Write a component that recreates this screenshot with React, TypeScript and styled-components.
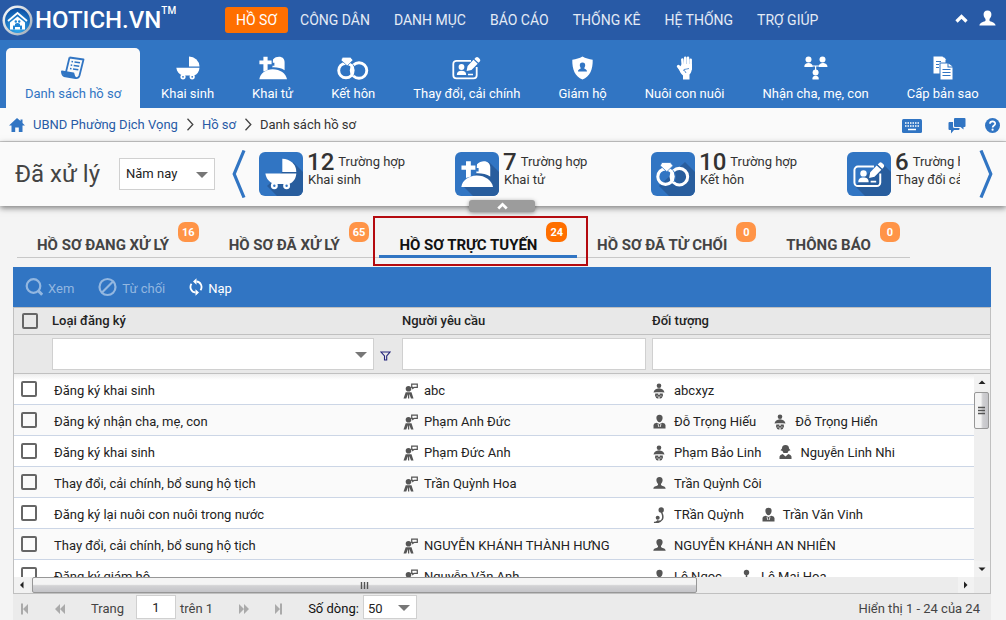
import React from "react";
import styled, { createGlobalStyle, css } from "styled-components";

const color = {
  navy: "#285aa6",
  blue: "#3175c3",
  shade: "#285d9d",
  orange: "#ff6f00",
  paper: "#fafafa",
  page: "#f4f4f4",
  header: "#e8e8e8",
  line: "#c0c0c0",
  text: "#333",
  icon: "#555",
};

const GlobalStyle = createGlobalStyle`
  *, *::before, *::after { box-sizing: border-box; }
  body {
    margin: 0;
    background: ${color.page};
    color: ${color.text};
    font: 13px/16px Roboto, "Noto Sans", sans-serif;
  }
  button, input, select { font: inherit; color: inherit; margin: 0; }
  button { border: 0; padding: 0; background: none; cursor: pointer; }
  a { color: inherit; text-decoration: none; }
  svg { display: block; flex: none; }
`;

const Page = styled.div`
  display: flex;
  flex-direction: column;
  min-height: 100vh;
`;

/* ---------- Top bar ---------- */

const TopBar = styled.header`
  display: flex;
  align-items: center;
  height: 40px;
  padding-right: 10px;
  background: ${color.navy};
  color: #fff;
`;

const Brand = styled.a`
  display: flex;
  align-items: center;
  width: 225px;
  padding-left: 2px;
  gap: 2px;
`;

const BrandName = styled.span`
  font-size: 24px;
  line-height: 30px;
  font-weight: 500;
`;

const Trademark = styled.sup`
  align-self: flex-start;
  margin-left: -2px;
  font-size: 10px;
  line-height: 12px;
  font-weight: 500;
`;

const MainNav = styled.nav`
  display: flex;
  flex: 1;
`;

const NavLink = styled.a<{ $active?: boolean }>`
  padding: 0 12px;
  border-radius: 3px;
  font-size: 14px;
  line-height: 26px;
  color: #e4ebf5;
  white-space: nowrap;
  ${(p) =>
    p.$active &&
    css`
      padding: 0 11px;
      background: ${color.orange};
      color: #fff;
    `}
`;

const UserTools = styled.div`
  display: flex;
  align-items: center;
  gap: 11px;
  padding-bottom: 4px;
`;

/* ---------- Ribbon ---------- */

const Ribbon = styled.nav`
  display: flex;
  height: 68px;
  padding: 8px 6px 0;
  background: ${color.blue};
  color: #fff;
`;

const RibbonTab = styled.a<{ $active?: boolean }>`
  display: flex;
  flex-direction: column;
  align-items: center;
  gap: 5px;
  padding: 8px 19px 0;
  border-radius: 5px 5px 0 0;
  line-height: 18px;
  white-space: nowrap;
  ${(p) =>
    p.$active &&
    css`
      margin-right: 2px;
      background: ${color.paper};
      color: ${color.blue};
    `}
`;

/* ---------- Breadcrumb ---------- */

const CrumbBar = styled.div`
  display: flex;
  align-items: center;
  justify-content: space-between;
  height: 34px;
  padding: 0 6px 0 9px;
  background: ${color.paper};
  border-bottom: 1px solid #ccc;
`;

const Crumbs = styled.nav`
  display: flex;
  align-items: center;
  gap: 8px;
`;

const CrumbLink = styled.a`
  color: ${color.navy};
`;

const HomeLink = styled.a`
  color: ${color.blue};
`;

const Tools = styled.div`
  display: flex;
  align-items: center;
  gap: 19px;
  padding-top: 2px;
`;

const IconButton = styled.button`
  color: ${color.blue};
  &:first-child {
    margin-right: 7px;
  }
`;

/* ---------- Summary strip ---------- */

const Summary = styled.section`
  position: relative;
  display: flex;
  align-items: center;
  height: 64px;
  padding: 0 13px 0 15px;
  background: ${color.paper};
  box-shadow: 0 2px 6px rgba(0, 0, 0, 0.5);
`;

const SummaryTitle = styled.h1`
  margin: 0 19px 0 0;
  font-size: 24px;
  line-height: 32px;
  font-weight: 400;
  color: #444;
  white-space: nowrap;
`;

const SelectBox = styled.span<{ $width?: number; $height: number; $gap: number; $low?: boolean }>`
  position: relative;
  display: flex;
  flex: ${(p) => (p.$width ? "none" : "1")};
  width: ${(p) => (p.$width ? p.$width + "px" : "auto")};
  height: ${(p) => p.$height}px;
  select {
    appearance: none;
    width: 100%;
    padding: ${(p) => (p.$low ? 3 : 0)}px 22px 0 ${(p) => p.$gap}px;
    border: 1px solid #d0d0d0;
    border-radius: 0;
    background: #fff;
    color: #222;
  }
  svg {
    position: absolute;
    right: 7px;
    top: 50%;
    margin-top: -2px;
    pointer-events: none;
  }
`;

const PageArrow = styled.button`
  margin-left: 17px;
  color: ${color.blue};
`;

const CardStrip = styled.ul`
  display: flex;
  flex: 1;
  min-width: 0;
  margin: 0 2px 0 13px;
  padding: 0;
  overflow: hidden;
  list-style: none;
`;

const Card = styled.li`
  display: flex;
  flex: none;
  width: 196px;
  gap: 5px;
`;

const CardIcon = styled.span`
  position: relative;
  display: grid;
  place-items: center;
  width: 44px;
  height: 44px;
  overflow: hidden;
  border-radius: 6px;
  background: ${color.blue};
  color: #fff;
  &::before {
    content: "";
    position: absolute;
    inset: 0;
    background: ${color.shade};
    clip-path: polygon(34px 10px, 44px 20px, 44px 44px, 18px 44px, 8px 34px);
  }
  svg {
    position: relative;
  }
`;

const CardText = styled.div`
  white-space: nowrap;
  line-height: 16px;
`;

const CardTop = styled.div`
  display: flex;
  align-items: center;
  gap: 4px;
  height: 20px;
  margin-left: -1px;
`;

const CardCount = styled.span`
  font-size: 24px;
  line-height: 20px;
  font-weight: 500;
`;

const Collapse = styled.button`
  position: absolute;
  left: 50%;
  bottom: -6px;
  display: grid;
  place-items: center;
  width: 66px;
  height: 12px;
  margin-left: -34px;
  border-radius: 3px;
  background: #9c9c9c;
  box-shadow: 0 1px 4px rgba(0, 0, 0, 0.4);
  color: #fff;
`;

/* ---------- Record tabs ---------- */

const TabRow = styled.nav`
  display: flex;
  align-self: flex-start;
  margin: 16px 0 9px 17px;
  border-bottom: 1px solid #c8c8c8;
`;

const TabLink = styled.a<{ $active?: boolean }>`
  position: relative;
  display: flex;
  gap: 9px;
  height: 36px;
  margin-bottom: -1px;
  padding: 0 10px 0 20px;
  border-bottom: 3px solid ${(p) => (p.$active ? color.blue : "transparent")};
  color: ${(p) => (p.$active ? "#111" : "#444")};
  white-space: nowrap;
`;

const TabLabel = styled.span`
  padding-top: 14px;
  font-size: 15px;
  line-height: 18px;
  font-weight: 700;
`;

const Badge = styled.span<{ $active?: boolean }>`
  min-width: 20px;
  height: 20px;
  padding: 0 4px;
  border-radius: 7px;
  background: ${(p) => (p.$active ? color.orange : "#ff9447")};
  color: #fff;
  font-size: 11px;
  line-height: 22px;
  font-weight: 700;
  text-align: center;
`;

const Highlight = styled.span`
  position: absolute;
  inset: -6px -11px -11px -6px;
  border: 2px solid #b40a0f;
  pointer-events: none;
`;

/* ---------- Grid ---------- */

const Grid = styled.section`
  display: flex;
  flex: 1;
  flex-direction: column;
  margin: 0 15px 0 13px;
`;

const Toolbar = styled.div`
  display: flex;
  align-items: center;
  gap: 24px;
  height: 40px;
  padding: 0 12px;
  background: ${color.blue};
  color: #fff;
`;

const ToolButton = styled.button`
  display: flex;
  align-items: center;
  gap: 5px;
  &:disabled {
    color: #93b7e0;
  }
  span {
    padding-top: 3px;
  }
`;

const Viewport = styled.div`
  position: relative;
  flex: 1 1 0;
  min-height: 270px;
  overflow: hidden;
  border: solid ${color.line};
  border-width: 0 1px;
  background: #fff;
`;

const Table = styled.table`
  width: 100%;
  table-layout: fixed;
  border-spacing: 0;
  color: #222;
  th,
  td {
    padding: 0;
    text-align: left;
    white-space: nowrap;
  }
`;

const HeadCell = styled.th`
  height: 28px;
  background: ${color.header};
  border-top: 1px solid ${color.line};
  border-bottom: 1px solid ${color.line};
  font-weight: 500;
`;

const FilterCell = styled.td`
  height: 39px;
  background: ${color.header};
  border-bottom: 1px solid ${color.line};
`;

const FilterRow = styled.div<{ $open?: boolean }>`
  display: flex;
  align-items: center;
  gap: 6px;
  padding-right: ${(p) => (p.$open ? 0 : 6)}px;
`;

const FilterInput = styled.input<{ $open?: boolean }>`
  flex: 1;
  min-width: 0;
  height: 32px;
  padding: 0 6px;
  border: 1px solid #d0d0d0;
  border-right-width: ${(p) => (p.$open ? 0 : 1)}px;
  border-radius: 0;
  background: #fff;
`;

const FilterButton = styled.button`
  width: 16px;
  padding-top: 4px;
  color: #23237a;
`;

const Row = styled.tr`
  td {
    height: 31px;
    padding-top: 4px;
    border-bottom: 1px solid #ccd6e6;
  }
  td:first-child {
    padding-top: 0;
  }
  &:nth-child(even) td {
    background: ${color.paper};
  }
  &:first-child td {
    background: linear-gradient(#ededed, #fff 6px);
  }
`;

const Check = styled.input`
  display: block;
  appearance: none;
  width: 16px;
  height: 16px;
  border: 2px solid #666;
  border-radius: 2px;
  margin: 0 0 0 7px;
  background: transparent;
`;

const HeadCheck = styled(Check)`
  margin-left: 8px;
`;

const TypeText = styled.span`
  padding-left: 2px;
`;

const People = styled.div`
  display: flex;
  gap: 18px;
  padding-left: 1px;
`;

const Person = styled.span`
  display: flex;
  align-items: center;
  gap: 6px;
  svg {
    color: ${color.icon};
  }
`;

/* ---------- Scroll bars ---------- */

const VScroll = styled.div`
  position: absolute;
  top: 67px;
  right: 0;
  bottom: 0;
  display: flex;
  flex-direction: column;
  width: 16px;
  background: #efefef;
`;

const HScroll = styled.div`
  display: flex;
  height: 17px;
  padding-right: 16px;
  background: #ececec;
  border: 1px solid ${color.line};
  border-top: 0;
`;

const ScrollArrow = styled.button`
  display: grid;
  flex: none;
  place-items: center;
  width: 16px;
  height: 16px;
  background: #f2f2f2;
  color: #222;
`;

const Track = styled.div<{ $vertical?: boolean }>`
  display: flex;
  flex: 1;
  padding: ${(p) => (p.$vertical ? "2px 0" : "0 2px")};
`;

const Thumb = styled.div<{ $vertical?: boolean }>`
  display: grid;
  place-items: center;
  border: 1px solid #979797;
  border-radius: 2px;
  color: #555;
  ${(p) =>
    p.$vertical
      ? css`
          width: 15px;
          height: 37px;
          background: linear-gradient(90deg, #f4f4f4 45%, #cfcfd2 60%, #c4c4c8);
        `
      : css`
          width: 72%;
          background: linear-gradient(#f4f4f4 45%, #d2d2d4 55%, #c4c4c8);
        `}
`;

/* ---------- Pager ---------- */

const Pager = styled.footer`
  display: flex;
  align-items: center;
  height: 26px;
  padding: 0 11px 0 7px;
  background: #ebebeb;
  color: #444;
  white-space: nowrap;
`;

const PagerButton = styled.button`
  width: 10px;
  padding-top: 3px;
  color: #aaa;
`;

const PagerGroup = styled.div<{ $gap: number; $after?: number }>`
  display: flex;
  align-items: center;
  gap: ${(p) => p.$gap}px;
  margin-right: ${(p) => p.$after || 0}px;
`;

const PagerLabel = styled.label<{ $gap: number; $dark?: boolean }>`
  display: flex;
  align-items: center;
  gap: ${(p) => p.$gap}px;
  color: ${(p) => (p.$dark ? "#111" : "#444")};
`;

const PagerText = styled.span`
  padding-top: 4px;
`;

const PageInput = styled.input`
  width: 40px;
  height: 24px;
  padding: 0;
  border: 1px solid #d0d0d0;
  background: #fff;
  color: #222;
  text-align: center;
`;

const PagerStatus = styled(PagerText)`
  margin-left: auto;
`;

/* ---------- Drawings ---------- */

const Icon = ({ w, h, box, children }: { w: number; h: number; box?: string; children: React.ReactNode }) => (
  <svg width={w} height={h} viewBox={box || `0 0 ${w} ${h}`} fill="currentColor" aria-hidden="true">
    {children}
  </svg>
);

const LogoMark = () => (
  <Icon w={31} h={31}>
    <defs>
      <linearGradient id="rim" x1="0" y1="0" x2="1" y2="1">
        <stop offset="0" stopColor="#fff" />
        <stop offset="1" stopColor="#9aa7b5" />
      </linearGradient>
      <radialGradient id="globe" cx=".5" cy=".8" r=".8">
        <stop offset="0" stopColor="#35b4f5" />
        <stop offset="1" stopColor="#0b4aa0" />
      </radialGradient>
    </defs>
    <circle cx="15.500" cy="15.500" r="15" fill="url(#rim)" />
    <circle cx="15.500" cy="15.500" r="12.500" fill="url(#globe)" />
    <path d="M6 16 15.500 8l9.500 8" fill="none" stroke="#fff" strokeWidth="1.800" />
    <path d="M8 17.500 15.500 11.500 23 17.500v7h-15z" fill="#fff" />
    <path d="M11 24.500v-3.500q1-1.500 2 0v-2q2.500-2 5 0v2q1-1.500 2 0v3.500h-2v-2.500h-5v2.500z" fill="#1f83d4" />
    <circle cx="13.800" cy="16.500" r="1.200" fill="#1f83d4" />
    <circle cx="17.200" cy="16.500" r="1.200" fill="#1f83d4" />
  </Icon>
);

const ScrollDoc = () => (
  <Icon w={24} h={24}>
    <path
      d="M8.500 1.500 22.500 3.500 18.500 19.500Q17.500 22.500 14.500 22L3 20Q1 19 .9 15.500L12.500 17.500Q13 21.500 15 22M8.500 1.500 5 16"
      fill="none"
      stroke="currentColor"
      strokeWidth="1.800"
      strokeLinejoin="round"
    />
    <path d="M1 15.500 12.500 17.500 14.500 22 3 20z" />
    <path d="M10.500 5.500l1.500.2M13.500 6l5.500.8M9.700 9l1.500.2M12.700 9.500l5.500.8M9 12.500l1.500.2M12 13l5.300.8" stroke="currentColor" strokeWidth="1.600" />
  </Icon>
);

const Pram = ({ s = 24 }: { s?: number }) => (
  <Icon w={s} h={s} box="0 0 24 24">
    <path d="M13 .5A10.500 10 0 0 1 23.500 10.500H13z" />
    <path d="M.3 11.700H23.500C23.200 15.500 21.200 18.500 18 19.500H7C3.200 18.500.8 15.500.3 11.700z" />
    <circle cx="7" cy="20.800" r="2.600" />
    <circle cx="16.200" cy="20.800" r="2.600" />
    <circle cx="7" cy="20.800" r=".9" fill={color.blue} />
    <circle cx="16.200" cy="20.800" r=".9" fill={color.blue} />
  </Icon>
);

const Grave = ({ w = 28, h = 24 }: { w?: number; h?: number }) => (
  <Icon w={w} h={h} box="0 0 28 24">
    <path d="M4.400.8h4.200v3.700h4v3.700h-4v6L4.400 15.500V8.200H.4V4.500h4z" />
    <path d="M14 3.500C15.500 1.500 18 .8 20 .8c3.500 0 5.600 2.200 5.600 5.400v8C22 12 18 11.200 13.500 11.400l-.1-1.600h2V6.800h-1.600z" />
    <path d="M.3 23.300C1 17.500 7 13.400 13.500 13.300 21 13.200 27 17.500 28 23.300z" />
  </Icon>
);

const Rings = ({ w = 32, h = 24 }: { w?: number; h?: number }) => (
  <Icon w={w} h={h} box="0 0 32 24">
    <circle cx="9" cy="14.500" r="7.300" fill="none" stroke="currentColor" strokeWidth="2.900" />
    <circle cx="22" cy="14.500" r="7.800" fill="none" stroke="currentColor" strokeWidth="2.900" />
    <path d="M16 8.500A9.500 9.500 0 0 1 16.800 19.500" fill="none" stroke={color.blue} strokeWidth=".9" />
    <path d="M5.500 1.200H13.500L16 4.200 10.200 9.800 4 4.200z" stroke={color.blue} strokeWidth=".7" />
  </Icon>
);

const IdPencil = ({ w = 29, h = 24 }: { w?: number; h?: number }) => (
  <Icon w={w} h={h} box="0 0 29 24">
    <path
      d="M19 4.800H4.500A3.200 3.200 0 0 0 1.300 8v11.200a3.200 3.200 0 0 0 3.200 3.200H21.500a3.200 3.200 0 0 0 3.200-3.200V11"
      fill="none"
      stroke="currentColor"
      strokeWidth="1.800"
    />
    <circle cx="9.500" cy="11" r="2.900" />
    <path d="M4.800 19c0-3 1.800-4.200 4.700-4.200s4.700 1.200 4.700 4.200z" />
    <path d="M23.700 1.600q1.300-1.200 2.600-.1l1.500 1.500q1.100 1.300 0 2.500l-1.300 1.300-4.100-3.900zM21.500 3.800l4.200 4-6.200 6.200-4.900 1.100 1-5.100z" />
    <path d="M16 18.500h5" stroke="currentColor" strokeWidth="1.500" />
  </Icon>
);

const Shield = () => (
  <Icon w={21} h={24}>
    <path d="M10.500.5C13.500 2.300 17 3.300 20.700 3.700 20.900 13.500 18 20.500 10.500 23.500 3 20.500.1 13.500.3 3.700 4 3.300 7.500 2.300 10.500.5z" />
    <path
      d="M10.500 6.500c-2 0-2.800 1.300-2.700 3 .1 1.300.8 2 1 2.800-.3 1-2.700.9-2.800 3.200h9c-.1-2.300-2.500-2.200-2.800-3.200.2-.8.9-1.500 1-2.800.1-1.700-.7-3-2.700-3z"
      fill={color.blue}
    />
  </Icon>
);

const Hand = () => (
  <Icon w={18} h={24}>
    <g fill="none" stroke="currentColor" strokeLinecap="round">
      <path d="M6.300 3.500 7 12M9.200 1.700V12M12 1.700v10M14.700 3.700V13" strokeWidth="2.500" />
      <path d="M2.300 10.300 6.500 15.500" strokeWidth="3" />
    </g>
    <path d="M6 8H16C16 14 15.500 17 13.500 18.500V23.500H7V19.500C4.500 17.500 4 15.500 2.500 12.500z" />
    <path d="M7 14q2 0 3 3M8 13.500q3-.5 5-1" fill="none" stroke={color.blue} strokeWidth=".8" />
  </Icon>
);

const Family = () => (
  <Icon w={24} h={24}>
    <circle cx="4.500" cy="3.500" r="3" />
    <circle cx="18.500" cy="3.500" r="3" />
    <path d="M.3 11c0-3 1.700-4 4.200-4s4.200 1 4.200 4zM14.800 11c0-3 1.700-4 4-4s4.700 1 4.700 4z" />
    <path d="M8 10h7M11.600 10v5" stroke="currentColor" strokeWidth="1.200" />
    <circle cx="11.600" cy="16.500" r="3" />
    <path d="M8.500 23.500v-1.200c0-1.800 1.200-2.600 3.100-2.600s3.100.8 3.100 2.600v1.200z" />
  </Icon>
);

const Copies = () => (
  <Icon w={20} h={24}>
    <path d="M.5.500H9.500L12.500 3.700V6.500H6.500V17.500H.5z" />
    <path d="M3 5.500h5M3 8.500h3M3 11.500h3" stroke={color.blue} strokeWidth="1.100" />
    <path d="M10.500.8 13.300 3.700H10.500z" />
    <path d="M7.500 7.500H14.500V11.500H19.500V23.500H7.500z" />
    <path d="M15.500 7.500 19.500 10.500H15.500z" />
    <path d="M9.500 13.500h8M9.500 16.500h8M9.500 19.500h8" stroke={color.blue} strokeWidth="1.100" />
  </Icon>
);

const UserIcon = () => (
  <Icon w={17} h={16}>
    <path d="M8.500.5C5.700.5 4.500 2.300 4.600 4.700c.1 2 1.200 3.400 1.900 4.400v1.700C5.500 12 .9 12 .4 15.500h16.200c-.5-3.500-5.100-3.500-6.100-4.700V9.100c.7-1 1.800-2.400 1.900-4.400C12.500 2.300 11.300.5 8.500.5z" />
  </Icon>
);

const ChevronUp = ({ w = 13, h = 9 }: { w?: number; h?: number }) => (
  <Icon w={w} h={h} box="0 0 13 9">
    <path d="M1.500 7.500 6.500 2.500 11.500 7.500" fill="none" stroke="currentColor" strokeWidth="3.200" />
  </Icon>
);

const HomeIcon = () => (
  <Icon w={16} h={14}>
    <path d="M8 0 11.500 3V1.500h2V5L16 7.500H13.500V14H9.800V9.500H6.200V14H2.500V7.500H0z" />
  </Icon>
);

const Separator = () => (
  <Icon w={8} h={13}>
    <path d="M1.500.8 6.800 6.500 1.500 12.200" fill="none" stroke="#444" strokeWidth="1.300" />
  </Icon>
);

const KeyboardIcon = () => (
  <Icon w={20} h={14}>
    <rect width="20" height="14" rx="1.500" />
    <path d="M3 4h14M3 7h14" stroke="#fff" strokeWidth="1.500" strokeDasharray="1.500 1" />
    <path d="M6 10.500h8" stroke="#fff" strokeWidth="1.500" />
  </Icon>
);

const ChatIcon = () => (
  <Icon w={18} h={16}>
    <path d="M7 0h9.500q1 0 1 1v7q0 1-1 1H15.500v2.500L12.500 9H7Q6 9 6 8V1q0-1 1-1z" />
    <path d="M1.500 4H5v4.500q0 1.500 1.500 1.500h5v1q0 1-1 1H6L3 15.500V12H1.500q-1 0-1-1V5q0-1 1-1z" />
  </Icon>
);

const HelpIcon = () => (
  <Icon w={15} h={15}>
    <circle cx="7.500" cy="7.500" r="7.500" />
    <path d="M5 5.800C5 2.700 10.200 2.700 10.200 5.700 10.200 7.500 7.600 7.500 7.600 9.500" fill="none" stroke="#fff" strokeWidth="1.700" />
    <circle cx="7.600" cy="11.700" r="1.100" fill="#fff" />
  </Icon>
);

const DropArrow = () => (
  <Icon w={12} h={6}>
    <path d="M0 0h12L6 6z" fill="#777" />
  </Icon>
);

const StripArrow = ({ flip }: { flip?: boolean }) => (
  <Icon w={14} h={48}>
    <path d={flip ? "M2 .5 11.800 24 2 47.500" : "M12 .5 2.200 24 12 47.500"} fill="none" stroke="currentColor" strokeWidth="3.200" />
  </Icon>
);

const SearchIcon = () => (
  <Icon w={18} h={18}>
    <circle cx="8.500" cy="8" r="6.800" fill="none" stroke="currentColor" strokeWidth="2.200" />
    <path d="M13 12.500 17.200 16.800" stroke="currentColor" strokeWidth="3" />
  </Icon>
);

const BanIcon = () => (
  <Icon w={19} h={20}>
    <circle cx="9.500" cy="10" r="8" fill="none" stroke="currentColor" strokeWidth="2.200" />
    <path d="M4 15.500 15 4.500" stroke="currentColor" strokeWidth="2.200" />
  </Icon>
);

const ReloadIcon = () => (
  <Icon w={14} h={18}>
    <path d="M7.500 3.500A5 5.500 0 0 1 11.500 12.300M6.500 14.500A5 5.500 0 0 1 2.500 5.700" fill="none" stroke="currentColor" strokeWidth="1.800" />
    <path d="M7.500.3v6.400L4 3.500zM6.500 11.300v6.400L10 14.500z" />
  </Icon>
);

const FunnelIcon = () => (
  <Icon w={11} h={10}>
    <path d="M1 1h9L6.700 5V9H4.500V5z" fill="none" stroke="currentColor" strokeWidth="1.100" />
  </Icon>
);

type Kind = "speaker" | "baby" | "man" | "woman" | "person" | "carer" | "pin";

const shapes: Record<Kind, React.ReactNode> = {
  speaker: (
    <>
      <circle cx="5.500" cy="5.800" r="2.800" />
      <path d="M2.700 9.200H8.500L10.500 15.500H8L6.500 11.500H4.800L3.300 15.500H.5z" />
      <path d="M5.600 10v5.500" stroke="currentColor" strokeWidth="1.300" />
      <path d="M8.700 1.100h5.600V4.300H11.500L9.700 5.500V4.300h-1z" fill="none" stroke="currentColor" strokeWidth="1.200" />
    </>
  ),
  baby: (
    <>
      <circle cx="6" cy="2.700" r="2.300" />
      <path d="M6 5.200C9 5.500 11 7 11.500 9.500L8.500 9.200H3.500L.5 9.500C1 7 3 5.500 6 5.200z" />
      <path d="M2.300 10.500H5.400V15.700Q2.300 15 2 12.500zM9.700 10.500H6.600V15.700Q9.700 15 10 12.500z" />
      <path d="M4.800 12.700h2.400" stroke="currentColor" strokeWidth="1.500" />
      <path d="M3.600 13h1M7.400 13h1" stroke="#fff" />
    </>
  ),
  man: (
    <>
      <path d="M6.500.7C8.700.7 9.800 2 9.600 4.200 9.400 6.500 8 8.200 6.500 8.200S3.600 6.500 3.400 4.200C3.200 2 4.300.7 6.500.7z" />
      <path d="M.5 14.500V11Q.7 9.200 3.700 8.700L6.500 10 9.300 8.700Q12.300 9.200 12.500 11V14.500z" />
      <path d="M5 9.800 5.800 13M8 9.800 7.200 13" fill="none" stroke="#fff" strokeWidth=".8" />
    </>
  ),
  woman: (
    <>
      <path d="M6.500 0C9 0 10 1.500 10 3.500L11.500 5.300 9.500 6 8.500 8H4.500L3.500 6 1.500 5.300 3 3.500C3 1.500 4 0 6.500 0z" />
      <path d="M.5 14V11.500Q1 9.500 3.700 9L6.500 11.500 9.300 9Q12 9.500 12.500 11.500V14z" />
    </>
  ),
  person: (
    <path d="M6.500 1C4.300 1 3.200 2.300 3.400 4.400 3.500 6 4.400 7.100 5 7.900V8.900C4.300 10 .7 9.700.3 12.700h12.400C12.300 9.700 8.700 10 8 8.900V7.900C8.600 7.100 9.500 6 9.600 4.400 9.800 2.300 8.700 1 6.500 1z" />
  ),
  carer: (
    <>
      <circle cx="8.200" cy="3" r="2.700" />
      <path d="M8.500 5Q10.800 10 9.200 12.500 7.500 15.500 1 15.500" fill="none" stroke="currentColor" strokeWidth="1.500" />
      <circle cx="4.700" cy="10.700" r="2" />
      <path d="M.3 15.500Q3 15 4.700 13 6 14 8 13L6 15.700z" />
    </>
  ),
  pin: (
    <>
      <circle cx="6.500" cy="3.500" r="2.700" />
      <path d="M6.500 4v11" stroke="currentColor" strokeWidth="1.500" />
    </>
  ),
};

const PersonIcon = ({ kind }: { kind: Kind }) => (
  <Icon w={15} h={16}>
    {shapes[kind]}
  </Icon>
);

const Tri = ({ d }: { d: string }) => (
  <Icon w={8} h={8}>
    <path d={d} />
  </Icon>
);

const Grip = ({ vertical }: { vertical?: boolean }) => (
  <Icon w={9} h={9}>
    <path
      d={vertical ? "M1 1.500h7M1 4.500h7M1 7.500h7" : "M1.500 1v7M4.500 1v7M7.500 1v7"}
      stroke="currentColor"
      strokeWidth="1.400"
    />
  </Icon>
);

const FirstIcon = ({ flip }: { flip?: boolean }) => (
  <Icon w={10} h={12}>
    <path d={flip ? "M6 .500h2v11H6zM1 1v10L6 6z" : "M1 .500h2v11H1zM8 1v10L3 6z"} />
  </Icon>
);

const DoubleIcon = ({ flip }: { flip?: boolean }) => (
  <Icon w={12} h={10}>
    <path d={flip ? "M0 0v10l5-5zM5 0v10l5-5z" : "M5 0v10L0 5zM10 0v10L5 5z"} />
  </Icon>
);

/* ---------- Data ---------- */

const mainNav = ["HỒ SƠ", "CÔNG DÂN", "DANH MỤC", "BÁO CÁO", "THỐNG KÊ", "HỆ THỐNG", "TRỢ GIÚP"];

const ribbon: { label: string; icon: React.ReactNode }[] = [
  { label: "Danh sách hồ sơ", icon: <ScrollDoc /> },
  { label: "Khai sinh", icon: <Pram /> },
  { label: "Khai tử", icon: <Grave /> },
  { label: "Kết hôn", icon: <Rings /> },
  { label: "Thay đổi, cải chính", icon: <IdPencil /> },
  { label: "Giám hộ", icon: <Shield /> },
  { label: "Nuôi con nuôi", icon: <Hand /> },
  { label: "Nhận cha, mẹ, con", icon: <Family /> },
  { label: "Cấp bản sao", icon: <Copies /> },
];

const cards: { count: number; label: string; icon: React.ReactNode }[] = [
  { count: 12, label: "Khai sinh", icon: <Pram s={32} /> },
  { count: 7, label: "Khai tử", icon: <Grave w={32} h={28} /> },
  { count: 10, label: "Kết hôn", icon: <Rings w={34} h={26} /> },
  { count: 6, label: "Thay đổi cải chính", icon: <IdPencil w={32} h={27} /> },
];

const tabs = [
  { label: "HỒ SƠ ĐANG XỬ LÝ", count: 16 },
  { label: "HỒ SƠ ĐÃ XỬ LÝ", count: 65 },
  { label: "HỒ SƠ TRỰC TUYẾN", count: 24, active: true },
  { label: "HỒ SƠ ĐÃ TỪ CHỐI", count: 0 },
  { label: "THÔNG BÁO", count: 0 },
];

const records: { type: string; by?: string; people: [Kind, string][] }[] = [
  { type: "Đăng ký khai sinh", by: "abc", people: [["baby", "abcxyz"]] },
  { type: "Đăng ký nhận cha, mẹ, con", by: "Phạm Anh Đức", people: [["man", "Đỗ Trọng Hiếu"], ["baby", "Đỗ Trọng Hiển"]] },
  { type: "Đăng ký khai sinh", by: "Phạm Đức Anh", people: [["baby", "Phạm Bảo Linh"], ["woman", "Nguyễn Linh Nhi"]] },
  { type: "Thay đổi, cải chính, bổ sung hộ tịch", by: "Trần Quỳnh Hoa", people: [["person", "Trần Quỳnh Côi"]] },
  { type: "Đăng ký lại nuôi con nuôi trong nước", people: [["carer", "TRần Quỳnh"], ["man", "Trần Văn Vinh"]] },
  { type: "Thay đổi, cải chính, bổ sung hộ tịch", by: "NGUYỄN KHÁNH THÀNH HƯNG", people: [["person", "NGUYỄN KHÁNH AN NHIÊN"]] },
  { type: "Đăng ký giám hộ", by: "Nguyễn Văn Anh", people: [["man", "Lê Ngọc"], ["pin", "Lê Mai Hoa"]] },
];

export default function App() {
  return (
    <Page>
      <GlobalStyle />
      <TopBar>
        <Brand href="#">
          <LogoMark />
          <BrandName>HOTICH.VN</BrandName>
          <Trademark>TM</Trademark>
        </Brand>
        <MainNav>
          {mainNav.map((item, i) => (
            <NavLink key={item} href="#" $active={i === 0}>
              {item}
            </NavLink>
          ))}
        </MainNav>
        <UserTools>
          <button aria-label="Thu gọn">
            <ChevronUp />
          </button>
          <button aria-label="Tài khoản">
            <UserIcon />
          </button>
        </UserTools>
      </TopBar>

      <Ribbon>
        {ribbon.map((item, i) => (
          <RibbonTab key={item.label} href="#" $active={i === 0}>
            {item.icon}
            {item.label}
          </RibbonTab>
        ))}
      </Ribbon>

      <CrumbBar>
        <Crumbs>
          <HomeLink href="#" aria-label="Trang chủ">
            <HomeIcon />
          </HomeLink>
          <CrumbLink href="#">UBND Phường Dịch Vọng</CrumbLink>
          <Separator />
          <CrumbLink href="#">Hồ sơ</CrumbLink>
          <Separator />
          <span>Danh sách hồ sơ</span>
        </Crumbs>
        <Tools>
          <IconButton aria-label="Bàn phím">
            <KeyboardIcon />
          </IconButton>
          <IconButton aria-label="Trao đổi">
            <ChatIcon />
          </IconButton>
          <IconButton aria-label="Trợ giúp">
            <HelpIcon />
          </IconButton>
        </Tools>
      </CrumbBar>

      <Summary>
        <SummaryTitle>Đã xử lý</SummaryTitle>
        <SelectBox $width={96} $height={32} $gap={6}>
          <select aria-label="Kỳ">
            <option>Năm nay</option>
          </select>
          <DropArrow />
        </SelectBox>
        <PageArrow aria-label="Trước">
          <StripArrow />
        </PageArrow>
        <CardStrip>
          {cards.map((card) => (
            <Card key={card.label}>
              <CardIcon>{card.icon}</CardIcon>
              <CardText>
                <CardTop>
                  <CardCount>{card.count}</CardCount>
                  Trường hợp
                </CardTop>
                {card.label}
              </CardText>
            </Card>
          ))}
        </CardStrip>
        <PageArrow aria-label="Sau">
          <StripArrow flip />
        </PageArrow>
        <Collapse aria-label="Thu gọn tổng hợp">
          <ChevronUp w={11} h={8} />
        </Collapse>
      </Summary>

      <TabRow>
        {tabs.map((tab) => (
          <TabLink key={tab.label} href="#" $active={tab.active}>
            <TabLabel>{tab.label}</TabLabel>
            <Badge $active={tab.active}>{tab.count}</Badge>
            {tab.active && <Highlight />}
          </TabLink>
        ))}
      </TabRow>

      <Grid>
        <Toolbar>
          <ToolButton disabled>
            <SearchIcon />
            <span>Xem</span>
          </ToolButton>
          <ToolButton disabled>
            <BanIcon />
            <span>Từ chối</span>
          </ToolButton>
          <ToolButton>
            <ReloadIcon />
            <span>Nạp</span>
          </ToolButton>
        </Toolbar>

        <Viewport>
          <Table>
            <colgroup>
              <col style={{ width: 38 }} />
              <col style={{ width: 350 }} />
              <col style={{ width: 250 }} />
              <col />
            </colgroup>
            <thead>
              <tr>
                <HeadCell>
                  <HeadCheck type="checkbox" aria-label="Chọn tất cả" />
                </HeadCell>
                <HeadCell>Loại đăng ký</HeadCell>
                <HeadCell>Người yêu cầu</HeadCell>
                <HeadCell>Đối tượng</HeadCell>
              </tr>
              <tr>
                <FilterCell />
                <FilterCell>
                  <FilterRow>
                    <SelectBox $height={32} $gap={6}>
                      <select aria-label="Lọc loại đăng ký" defaultValue="">
                        <option value="" />
                      </select>
                      <DropArrow />
                    </SelectBox>
                    <FilterButton aria-label="Lọc">
                      <FunnelIcon />
                    </FilterButton>
                  </FilterRow>
                </FilterCell>
                <FilterCell>
                  <FilterRow>
                    <FilterInput aria-label="Lọc người yêu cầu" />
                  </FilterRow>
                </FilterCell>
                <FilterCell>
                  <FilterRow $open>
                    <FilterInput $open aria-label="Lọc đối tượng" />
                  </FilterRow>
                </FilterCell>
              </tr>
            </thead>
            <tbody>
              {records.map((r, i) => (
                <Row key={i}>
                  <td>
                    <Check type="checkbox" aria-label={r.type} />
                  </td>
                  <td>
                    <TypeText>{r.type}</TypeText>
                  </td>
                  <td>
                    {r.by && (
                      <People>
                        <Person>
                          <PersonIcon kind="speaker" />
                          {r.by}
                        </Person>
                      </People>
                    )}
                  </td>
                  <td>
                    <People>
                      {r.people.map(([kind, name]) => (
                        <Person key={name}>
                          <PersonIcon kind={kind} />
                          {name}
                        </Person>
                      ))}
                    </People>
                  </td>
                </Row>
              ))}
            </tbody>
          </Table>
          <VScroll>
            <ScrollArrow aria-label="Cuộn lên">
              <Tri d="M4 2.500 7.500 6H.5z" />
            </ScrollArrow>
            <Track $vertical>
              <Thumb $vertical>
                <Grip vertical />
              </Thumb>
            </Track>
            <ScrollArrow aria-label="Cuộn xuống">
              <Tri d="M.5 2.500h7L4 6z" />
            </ScrollArrow>
          </VScroll>
        </Viewport>

        <HScroll>
          <ScrollArrow aria-label="Cuộn trái">
            <Tri d="M5.500.5v7L2 4z" />
          </ScrollArrow>
          <Track>
            <Thumb>
              <Grip />
            </Thumb>
          </Track>
          <ScrollArrow aria-label="Cuộn phải">
            <Tri d="M2 .5v7L5.500 4z" />
          </ScrollArrow>
        </HScroll>

        <Pager>
          <PagerGroup $gap={25} $after={26}>
            <PagerButton aria-label="Trang đầu">
              <FirstIcon />
            </PagerButton>
            <PagerButton aria-label="Trang trước">
              <DoubleIcon />
            </PagerButton>
          </PagerGroup>
          <PagerGroup $gap={4} $after={26}>
            <PagerLabel $gap={12}>
              <PagerText>Trang</PagerText>
              <PageInput defaultValue="1" />
            </PagerLabel>
            <PagerText>trên 1</PagerText>
          </PagerGroup>
          <PagerGroup $gap={25} $after={24}>
            <PagerButton aria-label="Trang sau">
              <DoubleIcon flip />
            </PagerButton>
            <PagerButton aria-label="Trang cuối">
              <FirstIcon flip />
            </PagerButton>
          </PagerGroup>
          <PagerLabel $gap={4} $dark>
            <PagerText>Số dòng:</PagerText>
            <SelectBox $width={54} $height={24} $gap={4} $low>
              <select>
                <option>50</option>
              </select>
              <DropArrow />
            </SelectBox>
          </PagerLabel>
          <PagerStatus>Hiển thị 1 - 24 của 24</PagerStatus>
        </Pager>
      </Grid>
    </Page>
  );
}
